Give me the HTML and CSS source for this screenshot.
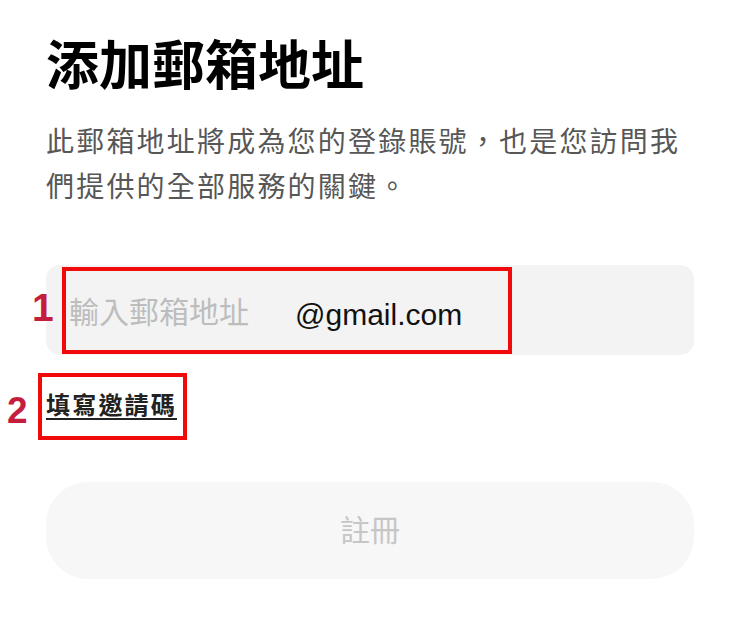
FILE: index.html
```html
<!DOCTYPE html>
<html lang="zh-Hant">
<head>
<meta charset="utf-8">
<title>添加郵箱地址</title>
<link rel="stylesheet" href="styles.css">
</head>
<body>
<main class="page">
  <h1 class="title">添加郵箱地址</h1>
  <p class="desc">此郵箱地址將成為您的登錄賬號，也是您訪問我們提供的全部服務的關鍵。</p>

  <div class="field">
    <span class="placeholder">輸入郵箱地址</span>
    <span class="domain">@gmail.com</span>
    <span class="mark mark-1"></span>
    <span class="step step-1">1</span>
  </div>

  <div class="invite-row">
    <a class="invite" href="#">填寫邀請碼</a>
    <span class="mark mark-2"></span>
    <span class="step step-2">2</span>
  </div>

  <button class="submit" type="button">註冊</button>
</main>
</body>
</html>
```

FILE: styles.css
```css
html, body {
  margin: 0;
  padding: 0;
  background: #ffffff;
}

body {
  font-family: "Noto Sans CJK TC", "Noto Sans", sans-serif;
}

.page {
  display: flex;
  flex-direction: column;
  align-items: flex-start;
  padding: 31px 45px 0 46px;
}

.title {
  margin: 0;
  font-size: 53px;
  line-height: 1.2;
  font-weight: 700;
  color: #000000;
}

.desc {
  margin: 23px 0 0;
  font-size: 28px;
  line-height: 45px;
  letter-spacing: 2.2px;
  color: #575757;
  width: 660px;
}

.field {
  position: relative;
  margin-top: 57px;
  width: 648px;
  height: 90px;
  box-sizing: border-box;
  border-radius: 14px;
  background: #f3f3f3;
  display: flex;
  align-items: center;
  gap: 46px;
  padding-left: 23px;
}

.placeholder {
  font-size: 30px;
  line-height: 40px;
  color: #bdbdbd;
}

.domain {
  font-family: "Liberation Sans", Arial, sans-serif;
  font-size: 30px;
  line-height: 40px;
  color: #111111;
  padding-top: 10px;
}

.mark {
  position: absolute;
  box-sizing: border-box;
  border: 4px solid #f00a0a;
}

.mark-1 {
  left: 16px;
  top: 2px;
  width: 450px;
  height: 87px;
}

.step {
  position: absolute;
  font-family: "Liberation Sans", Arial, sans-serif;
  font-weight: 700;
  color: #c41d3d;
  line-height: 1;
}

.step-1 {
  font-size: 39px;
  left: -14px;
  top: 23px;
}

.invite-row {
  position: relative;
  margin-top: 34px;
  display: flex;
}

.invite {
  font-size: 24px;
  line-height: 30px;
  font-weight: 700;
  letter-spacing: 2.2px;
  color: #222222;
  text-decoration: underline;
  text-decoration-thickness: 2px;
  text-underline-offset: 4px;
}

.mark-2 {
  left: -8px;
  top: -16px;
  width: 149px;
  height: 67px;
}

.step-2 {
  font-size: 37px;
  left: -39px;
  top: 3px;
}

.submit {
  margin-top: 63px;
  width: 648px;
  height: 97px;
  border: none;
  border-radius: 42px;
  background: #f7f7f7;
  font-family: "Noto Sans CJK TC", "Noto Sans", sans-serif;
  font-size: 30px;
  color: #c6c6c6;
  padding: 0 0 5px;
}
```
